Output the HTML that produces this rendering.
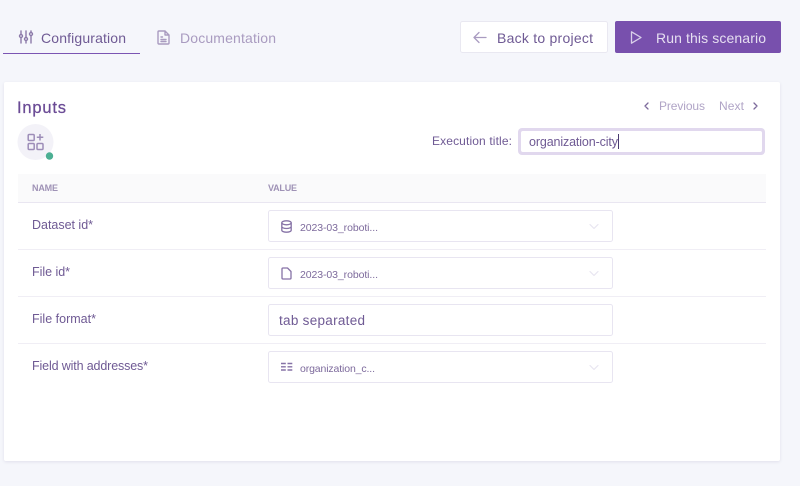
<!DOCTYPE html>
<html><head><meta charset="utf-8"><style>
html,body{margin:0;padding:0;width:800px;height:486px;overflow:hidden;background:#f5f6fb}
svg{display:block}
text{font-family:"Liberation Sans",sans-serif;fill:#6f5a94}
</style></head><body>
<svg width="800" height="486" viewBox="0 0 800 486" xmlns="http://www.w3.org/2000/svg">
<defs><filter id="s" x="-2%" y="-2%" width="104%" height="104%"><feDropShadow dx="0" dy="1" stdDeviation="1.5" flood-color="#b9b5cf" flood-opacity=".35"/></filter></defs>
<rect width="800" height="486" fill="#f5f6fb"/>
<!-- tabs -->
<g fill="none" stroke="#8c7aa9" stroke-width="1.4" stroke-linecap="round">
<path d="M21 31v3M21 38v5M26 31v6M26 41v2M31 31v1M31 36v7"/>
<circle cx="21" cy="36" r="1.5"/><circle cx="26" cy="39" r="1.5"/><circle cx="31" cy="34" r="1.5"/>
</g>
<text x="41" y="43" font-size="14" textLength="85" lengthAdjust="spacing">Configuration</text>
<rect x="3" y="53" width="137" height="1" fill="#7b55b3"/>
<g fill="none" stroke="#a99bc0" stroke-width="1.400" stroke-linejoin="round" stroke-linecap="round">
<path d="M159 31h6l4 4v8a1 1 0 0 1-1 1h-9a1 1 0 0 1-1-1v-11a1 1 0 0 1 1-1zM165 31v4h4M161 37h1.500M161 39.500h5M161 41.500h5"/>
</g>
<text x="180" y="43" font-size="14" textLength="96" lengthAdjust="spacing" style="fill:#a99bc0">Documentation</text>
<!-- buttons -->
<rect x="460.500" y="21.500" width="147" height="31" rx="2" fill="#fff" stroke="#e9e8f1"/>
<path d="M486 37.500h-12M479 32.500l-5 5 5 5" fill="none" stroke="#a99bc0" stroke-width="1.300" stroke-linecap="round" stroke-linejoin="round"/>
<text x="497" y="43" font-size="14" textLength="96" lengthAdjust="spacing">Back to project</text>
<rect x="615" y="21" width="166" height="32" rx="2" fill="#7850ad"/>
<path d="M631.500 31.800v11.400l9.500-5.700z" fill="none" stroke="#d9cfe9" stroke-width="1.300" stroke-linejoin="round"/>
<text x="656" y="43" font-size="14" textLength="110" lengthAdjust="spacing" style="fill:#e6dff1">Run this scenario</text>
<!-- card -->
<rect x="4" y="82" width="776" height="379" rx="2" fill="#fff" filter="url(#s)"/>
<text x="17" y="113" font-size="16.500" font-weight="400" textLength="49" lengthAdjust="spacing" style="fill:#6a4a95;stroke:#6a4a95;stroke-width:.25">Inputs</text>
<circle cx="35.500" cy="142" r="18" fill="#f3f2f8"/>
<g fill="none" stroke="#9d8db8" stroke-width="1.500">
<rect x="28.200" y="134.500" width="6" height="6" rx="1"/><rect x="28.200" y="143.500" width="6" height="6" rx="1"/><rect x="37" y="143.500" width="6" height="6" rx="1"/>
<path d="M40 134v6.500M36.800 137.300h6.500"/>
</g>
<circle cx="49.500" cy="156" r="3.700" fill="#4caf93"/>
<!-- pager -->
<path d="M648 103l-3 3 3 3M754 103l3 3-3 3" fill="none" stroke="#7d6a9c" stroke-width="1.300" stroke-linecap="round" stroke-linejoin="round"/>
<text x="659" y="110" font-size="12" textLength="46" lengthAdjust="spacing" style="fill:#b0a4c6">Previous</text>
<text x="719" y="110" font-size="12" textLength="25" lengthAdjust="spacing" style="fill:#b0a4c6">Next</text>
<!-- exec title -->
<text x="432" y="145" font-size="12" textLength="80" lengthAdjust="spacing">Execution title:</text>
<rect x="518" y="128" width="247" height="27" rx="4" fill="#e1d8ee"/>
<rect x="521" y="131" width="241" height="21" rx="2" fill="#fff"/>
<text x="529" y="146" font-size="12.500" textLength="89" lengthAdjust="spacing">organization-city</text>
<rect x="618" y="134" width="1" height="15" fill="#4a3a70"/>
<!-- table -->
<rect x="18" y="174" width="748" height="28" fill="#fafafb"/>
<rect x="18" y="202" width="748" height="1" fill="#e9e6f1"/>
<text x="32" y="191" font-size="9" font-weight="700" textLength="26" lengthAdjust="spacing" style="fill:#9f92b6">NAME</text>
<text x="268" y="191" font-size="9" font-weight="700" textLength="29" lengthAdjust="spacing" style="fill:#9f92b6">VALUE</text>
<rect x="18" y="249" width="748" height="1" fill="#f0eef5"/>
<rect x="18" y="296" width="748" height="1" fill="#f0eef5"/>
<rect x="18" y="343" width="748" height="1" fill="#f0eef5"/>
<text x="32" y="229" font-size="12.500" textLength="61" lengthAdjust="spacing">Dataset id*</text>
<text x="32" y="276" font-size="12.500" textLength="38" lengthAdjust="spacing">File id*</text>
<text x="32" y="323" font-size="12.500" textLength="64" lengthAdjust="spacing">File format*</text>
<text x="32" y="370" font-size="12.500" textLength="116" lengthAdjust="spacing">Field with addresses*</text>
<g fill="#fff" stroke="#e8e5f1" stroke-width="1">
<rect x="268.500" y="210.500" width="344" height="31" rx="2"/>
<rect x="268.500" y="257.500" width="344" height="31" rx="2"/>
<rect x="268.500" y="304.500" width="344" height="31" rx="2"/>
<rect x="268.500" y="351.500" width="344" height="31" rx="2"/>
</g>
<g fill="none" stroke="#e8e5f1" stroke-width="1.200" stroke-linecap="round" stroke-linejoin="round">
<path d="M590 224.500l4 4 4-4M590 271.500l4 4 4-4M590 365.500l4 4 4-4"/>
</g>
<!-- db icon -->
<g fill="none" stroke="#8672a6" stroke-width="1.300">
<ellipse cx="286.500" cy="222.800" rx="4.700" ry="2"/>
<path d="M281.800 222.800v7.400c0 1.100 2.100 2 4.700 2s4.700-.9 4.700-2v-7.400M281.800 226.500c0 1.100 2.100 2 4.700 2s4.700-.9 4.700-2"/>
</g>
<text x="300" y="231" font-size="10.500" textLength="78" lengthAdjust="spacing" style="fill:#7d6a9c">2023-03_roboti...</text>
<!-- file icon -->
<path d="M283 268h4.500l3.500 3.500v6.500a1 1 0 0 1-1 1h-7a1 1 0 0 1-1-1v-9a1 1 0 0 1 1-1z" fill="none" stroke="#8672a6" stroke-width="1.300" stroke-linejoin="round"/>
<text x="300" y="278" font-size="10.500" textLength="78" lengthAdjust="spacing" style="fill:#7d6a9c">2023-03_roboti...</text>
<text x="279" y="325" font-size="13.500" textLength="86" lengthAdjust="spacing">tab separated</text>
<!-- field icon -->
<g stroke="#8672a6" stroke-width="1.400">
<path d="M281 363.500h4.800M281 366.800h4.800M281 370h4.800M287.500 363.500h4.800M287.500 366.800h4.800M287.500 370h4.800"/>
</g>
<text x="300" y="372" font-size="10.500" textLength="75" lengthAdjust="spacing" style="fill:#7d6a9c">organization_c...</text>
</svg>
</body></html>
